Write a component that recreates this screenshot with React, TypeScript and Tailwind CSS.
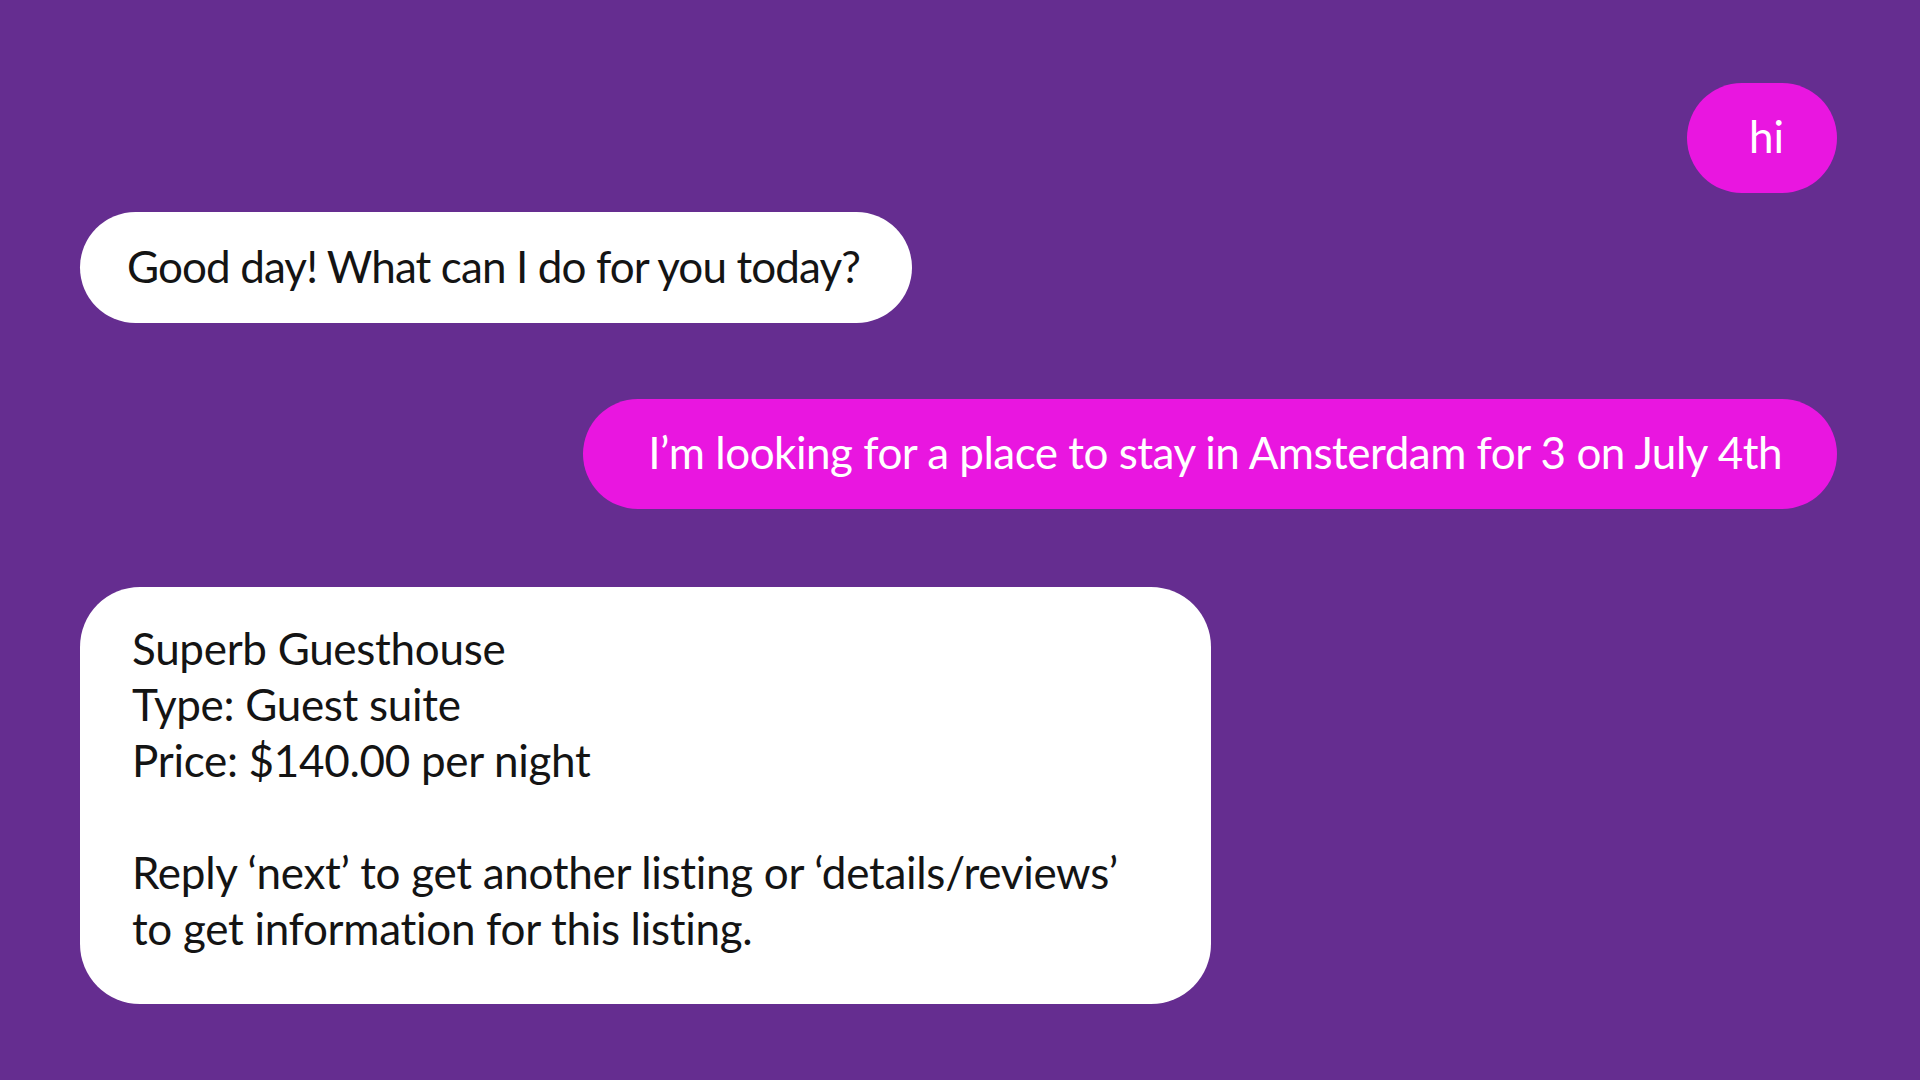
export default function App() {
  return (
    <div className="min-h-screen w-full bg-[#652d90] pt-[83px] pl-[80px] pr-[83px] flex flex-col font-['Lato',sans-serif] text-[44px]">
      <div className="flex justify-end">
        <div className="h-[110px] rounded-full bg-[#e916e0] text-white pl-[62px] pr-[53px] pb-[4px] flex items-center">hi</div>
      </div>

      <div className="flex justify-start mt-[19px]">
        <div className="h-[111px] rounded-full bg-white text-[#141414] pl-[47px] pr-[52px] pb-[4px] flex items-center tracking-[-0.9px]">
          Good day! What can I do for you today?
        </div>
      </div>

      <div className="flex justify-end mt-[76px]">
        <div className="h-[110px] rounded-full bg-[#e916e0] text-white pl-[65px] pr-[55px] pb-[5px] flex items-center tracking-[-0.5px]">
          I’m looking for a place to stay in Amsterdam for 3 on July 4th
        </div>
      </div>

      <div className="flex justify-start mt-[78px]">
        <div className="w-[1131px] h-[417px] rounded-[60px] bg-white text-[#141414] pl-[52px] pt-[33px] leading-[56px] tracking-[-0.3px]">
          <p>Superb Guesthouse</p>
          <p>Type: Guest suite</p>
          <p>Price: $140.00 per night</p>
          <p>&nbsp;</p>
          <p>Reply ‘next’ to get another listing or ‘details/reviews’</p>
          <p>to get information for this listing.</p>
        </div>
      </div>
    </div>
  );
}
